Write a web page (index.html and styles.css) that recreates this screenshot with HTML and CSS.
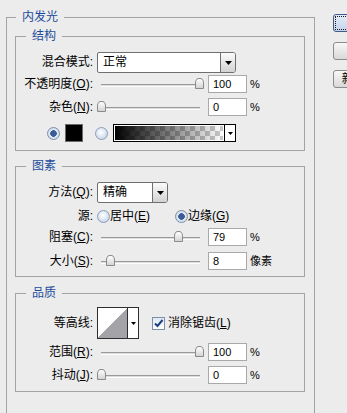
FILE: index.html
```html
<!DOCTYPE html>
<html lang="zh-CN">
<head>
<meta charset="utf-8">
<title>图层样式 - 内发光</title>
<link rel="stylesheet" href="styles.css">
</head>
<body>
<div class="dialog">
  <fieldset class="grp outer">
    <legend>内发光</legend>

    <fieldset class="grp sub sec-structure">
      <legend>结构</legend>
      <div class="row h-select">
        <span class="lbl">混合模式:</span>
        <div class="select sel-blend"><span class="val">正常</span><span class="drop"><svg width="7" height="4" viewBox="0 0 7 4"><path d="M0 0H7L3.5 4Z"/></svg></span></div>
      </div>
      <div class="row h-field mt-2">
        <span class="lbl">不透明度(<u>O</u>):</span>
        <div class="slider"><span class="track"></span><span class="thumb" style="--v:100"></span></div>
        <span class="num">100</span><span class="unit">%</span>
      </div>
      <div class="row h-field mt-5">
        <span class="lbl">杂色(<u>N</u>):</span>
        <div class="slider"><span class="track"></span><span class="thumb" style="--v:0"></span></div>
        <span class="num">0</span><span class="unit">%</span>
      </div>
      <div class="row h-field mt-8 colors">
        <span class="radio on"></span>
        <span class="swatch"></span>
        <span class="radio gap-r"></span>
        <div class="grad"><span class="fill"></span><span class="drop-w"><svg width="5" height="3" viewBox="0 0 5 3"><path d="M0 0H5L2.5 3Z"/></svg></span></div>
      </div>
    </fieldset>

    <fieldset class="grp sub sec-elements">
      <legend>图素</legend>
      <div class="row h-select">
        <span class="lbl">方法(<u>Q</u>):</span>
        <div class="select sel-method"><span class="val">精确</span><span class="drop"><svg width="7" height="4" viewBox="0 0 7 4"><path d="M0 0H7L3.5 4Z"/></svg></span></div>
      </div>
      <div class="row h-src mt-5">
        <span class="lbl">源:</span>
        <span class="radio"></span><span class="opt">居中(<u>E</u>)</span>
        <span class="radio on src-2"></span><span class="opt">边缘(<u>G</u>)</span>
      </div>
      <div class="row h-field mt-4">
        <span class="lbl">阻塞(<u>C</u>):</span>
        <div class="slider"><span class="track"></span><span class="thumb" style="--v:79"></span></div>
        <span class="num">79</span><span class="unit">%</span>
      </div>
      <div class="row h-field mt-6">
        <span class="lbl">大小(<u>S</u>):</span>
        <div class="slider"><span class="track"></span><span class="thumb" style="--v:9.5"></span></div>
        <span class="num">8</span><span class="unit">像素</span>
      </div>
    </fieldset>

    <fieldset class="grp sub sec-quality">
      <legend>品质</legend>
      <div class="row h-contour">
        <span class="lbl">等高线:</span>
        <div class="contour"><span class="preview"></span><span class="drop-c"><svg width="5" height="3" viewBox="0 0 5 3"><path d="M0 0H5L2.5 3Z"/></svg></span></div>
        <span class="check"><svg width="11" height="11" viewBox="0 0 11 11"><path d="M2 5.5L4.5 8L9.5 2" fill="none" stroke="#1f3f7e" stroke-width="2"/></svg></span>
        <span class="opt">消除锯齿(<u>L</u>)</span>
      </div>
      <div class="row h-field mt-4">
        <span class="lbl">范围(<u>R</u>):</span>
        <div class="slider"><span class="track"></span><span class="thumb" style="--v:100"></span></div>
        <span class="num">100</span><span class="unit">%</span>
      </div>
      <div class="row h-field mt-5">
        <span class="lbl">抖动(<u>J</u>):</span>
        <div class="slider"><span class="track"></span><span class="thumb" style="--v:0"></span></div>
        <span class="num">0</span><span class="unit">%</span>
      </div>
    </fieldset>
  </fieldset>

  <div class="buttons">
    <div class="btn default">确定</div>
    <div class="btn">取消</div>
    <div class="btn">新建样式(W)...</div>
  </div>
</div>
</body>
</html>
```

FILE: styles.css
```css
* { box-sizing: border-box; }
html, body { margin: 0; padding: 0; overflow: hidden; }
body {
  width: 347px;
  height: 413px;
  background: #ececec;
  color: #000;
  font: 12px/15px "Liberation Sans", "Noto Sans CJK SC", sans-serif;
}
u { text-decoration: underline; text-underline-offset: 1px; }

.dialog { display: flex; align-items: flex-start; }

.grp {
  margin: 0;
  min-width: 0;
  padding: 0;
  border: 1px solid #a3a3a3;
}
.grp > legend {
  height: 15px;
  padding: 0 6px;
  font-size: 12px;
  line-height: 15px;
  color: #1d4c9c;
}
.outer {
  flex: none;
  width: 309px;
  margin: 10px 0 0 6px;
  padding: 4px 9px 40px 8px;
}
.outer > legend { margin-left: 1px; }
.sub > legend { margin-left: 10px; }

.sec-structure { padding: 8px 0 8px; }
.sec-elements { margin-top: 8px; padding: 8px 0 6px; }
.sec-quality { margin-top: 9px; padding: 6px 0 7px; }

.row { display: flex; align-items: center; }
.h-select { height: 21px; }
.h-field { height: 18px; }
.h-src { height: 16px; }
.h-contour { height: 32px; }
.mt-2 { margin-top: 2px; }
.mt-4 { margin-top: 4px; }
.mt-5 { margin-top: 5px; }
.mt-6 { margin-top: 6px; }
.mt-8 { margin-top: 8px; }

.lbl {
  flex: none;
  width: 77px;
  margin-right: 4px;
  text-align: right;
  white-space: nowrap;
}
.opt { white-space: nowrap; }

/* select */
.select {
  flex: none;
  display: flex;
  height: 21px;
  background: #fff;
  border: 1px solid #6f6f6f;
  border-radius: 2px 3px 3px 2px;
}
.sel-blend { width: 139px; }
.sel-method { width: 71px; }
.select .val { flex: 1; padding-left: 5px; line-height: 19px; }
.select .drop {
  flex: none;
  width: 15px;
  display: flex;
  align-items: center;
  justify-content: center;
  border-left: 1px solid #6f6f6f;
  border-radius: 0 2px 2px 0;
  background: linear-gradient(#fbfbfb, #d2d2d2);
}

/* slider */
.slider {
  position: relative;
  flex: none;
  width: 108px;
  height: 18px;
  margin-right: 3px;
}
.track {
  position: absolute;
  left: 4px;
  right: 5px;
  top: 9px;
  height: 3px;
  background: #dcdcdc;
  border-top: 1px solid #9a9a9a;
  border-bottom: 1px solid #fdfdfd;
}
.thumb {
  position: absolute;
  top: 3px;
  left: calc(var(--v) * 0.98px);
  width: 9px;
  height: 11px;
  border: 1px solid #8a8a8a;
  border-radius: 4px 4px 1px 1px / 5px 5px 1px 1px;
  background: linear-gradient(#ffffff, #d4d4d4);
}

.num {
  flex: none;
  width: 39px;
  height: 18px;
  padding-left: 4px;
  background: #fff;
  border: 1px solid #a9a9a9;
  font-size: 11px;
  line-height: 16px;
}
.unit { margin-left: 3px; font-size: 11px; }
.unit:not(:empty) { white-space: nowrap; }

/* radios */
.radio {
  flex: none;
  width: 13px;
  height: 13px;
  border-radius: 50%;
  border: 1px solid #8b9cb6;
  background: radial-gradient(circle at 45% 40%, #ffffff 0, #e6eef8 35%, #b7c9e2 100%);
}
.radio.on {
  border-color: #7b8eaa;
  background: radial-gradient(circle, #3a5d93 0, #3a5d93 3px, #dfe7f2 3.6px, #c6d3e6 100%);
}
.h-src .radio { margin-right: 0; }
.src-2 { margin-left: 25px; margin-right: 2px; }
.h-src .radio + .opt { margin-left: 0; }
.h-src .src-2 + .opt { margin-left: 0; }

.colors { padding-left: 31px; }
.swatch {
  flex: none;
  width: 18px;
  height: 18px;
  margin: 0 12px 0 5px;
  background: #000;
  border: 1px solid #6a6a6a;
}
.gap-r { margin-right: 5px; }
.grad {
  flex: none;
  display: flex;
  width: 123px;
  height: 18px;
  border: 1px solid #000;
}
.grad .fill {
  flex: 1;
  border: 1px solid #fff;
  background:
    linear-gradient(to right, #000 0, rgba(0,0,0,0) 100%),
    repeating-conic-gradient(#c9c9c9 0 25%, #ffffff 0 50%) 0 0 / 10px 10px;
}
.grad .drop-w {
  flex: none;
  width: 11px;
  display: flex;
  align-items: center;
  justify-content: center;
  background: #fff;
  border-left: 1px solid #000;
}

/* contour */
.contour {
  flex: none;
  display: flex;
  width: 42px;
  height: 32px;
  border: 1px solid #2e2e2e;
  background: #fff;
}
.contour .preview {
  flex: none;
  width: 29px;
  background: linear-gradient(to top left, #a4a4a8 50%, #ffffff 50%);
}
.contour .drop-c {
  flex: 1;
  display: flex;
  align-items: center;
  justify-content: center;
  border-left: 1px solid #2e2e2e;
}
.check {
  flex: none;
  width: 13px;
  height: 13px;
  margin: 0 3px 0 13px;
  display: flex;
  align-items: center;
  justify-content: center;
  border: 1px solid #7d90aa;
  background: linear-gradient(#dfe8f3, #ffffff);
}

/* buttons */
.buttons {
  flex: none;
  display: flex;
  flex-direction: column;
  gap: 10px;
  margin-left: 18px;
  padding-top: 14px;
}
.btn {
  width: 95px;
  height: 18px;
  display: flex;
  align-items: center;
  justify-content: center;
  white-space: nowrap;
  border: 1px solid #8c8c8c;
  border-radius: 3px;
  background: linear-gradient(#f8f8f8, #d8d8d8);
}
.btn.default {
  border-color: #3f5b88;
  background: linear-gradient(#e3ecf7, #c4d5ea);
  outline: 1px dotted #1a1a1a;
  outline-offset: -3px;
}
```
